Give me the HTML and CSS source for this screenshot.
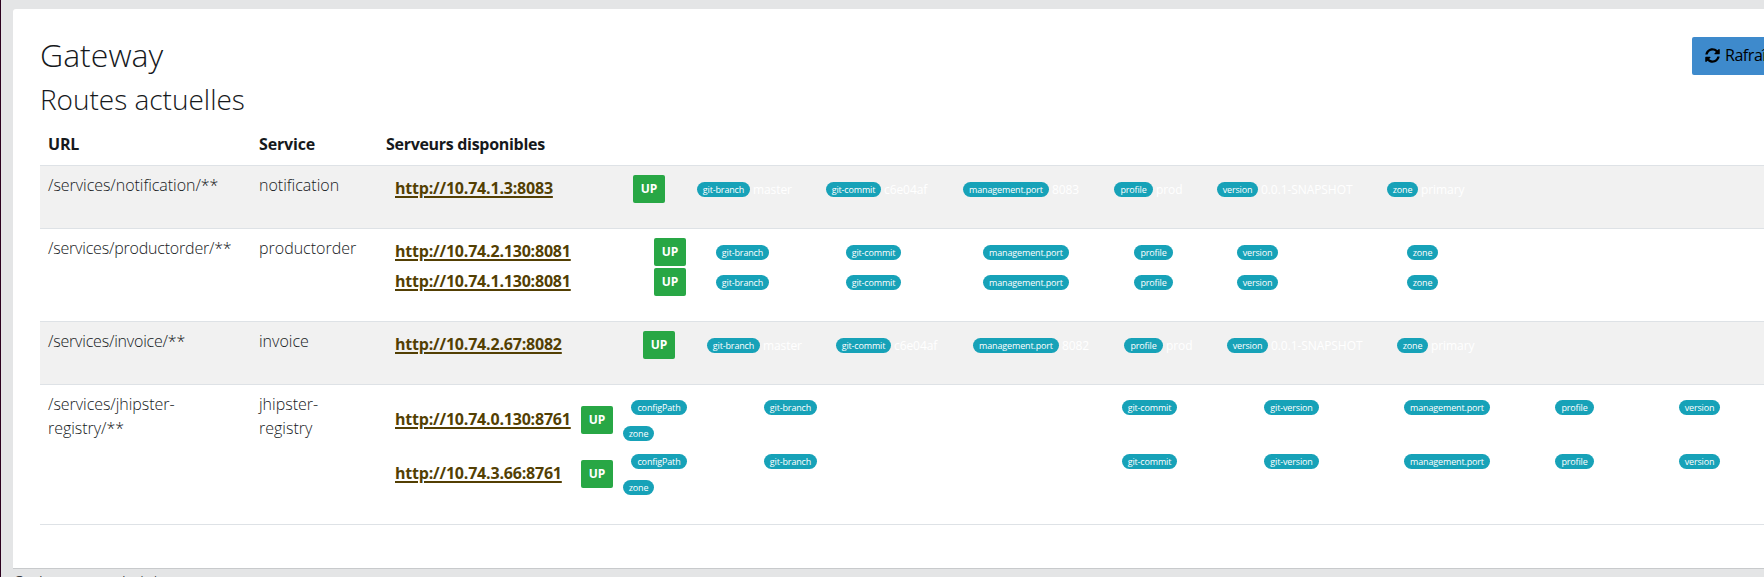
FILE: index.html
```html
<!DOCTYPE html>
<html lang="fr">
<head>
<meta charset="utf-8">
<title>Gateway</title>
<link rel="stylesheet" href="styles.css">
</head>
<body>
<div class="page">
  <main class="card">
    <header class="head">
      <h2 class="title">Gateway</h2>
      <button class="refresh"><svg class="icon" viewBox="0 0 512 512"><path fill="currentColor" d="M370.7 133.3C339.5 104 298.9 88 255.8 88c-77.5.1-144.3 53.2-162.8 126.9-1.3 5.4-6.1 9.2-11.7 9.2H24.1c-7.5 0-13.200-6.800-11.800-14.200C33.900 94.900 134.800 8 256 8c66.400 0 126.800 26.100 171.300 68.700L463 41C478.100 25.900 504 36.600 504 57.900V192c0 13.300-10.700 24-24 24H345.900c-21.400 0-32.100-25.900-17-41l41.800-41.700zM32 296h134.100c21.400 0 32.100 25.900 17 41l-41.800 41.800c31.300 29.300 71.800 45.300 114.900 45.300 77.400-.1 144.300-53.100 162.800-126.800 1.300-5.400 6.100-9.200 11.700-9.200h57.300c7.500 0 13.200 6.800 11.800 14.200C478.100 417.100 377.200 504 256 504c-66.400 0-126.800-26.100-171.300-68.700L49 471C33.900 486.100 8 475.400 8 454.100V320c0-13.300 10.700-24 24-24z"/></svg><span>Rafraîchir</span></button>
    </header>
    <h3 class="subtitle">Routes actuelles</h3>
    <div class="table">
      <div class="row labels"><div>URL</div><div>Service</div><div class="wide">Serveurs disponibles</div></div>

      <div class="row odd">
        <div class="url">/services/notification/**</div><div>notification</div>
        <div class="servers at-near">
          <div class="server"><a class="link">http://10.74.1.3:8083</a><span class="up">UP</span>
            <div class="tags"><span class="tag"><b class="pill branch">git-branch</b>master</span><span class="tag"><b class="pill commit">git-commit</b>c6e04af</span><span class="tag"><b class="pill port">management.port</b>8083</span><span class="tag"><b class="pill profile">profile</b>prod</span><span class="tag"><b class="pill version">version</b>0.0.1-SNAPSHOT</span><span class="tag"><b class="pill zone">zone</b>primary</span></div></div>
        </div>
      </div>

      <div class="row">
        <div class="url long">/services/productorder/**</div><div>productorder</div>
        <div class="servers at-far">
          <div class="server"><a class="link">http://10.74.2.130:8081</a><span class="up">UP</span>
            <div class="tags"><span class="tag"><b class="pill branch">git-branch</b></span><span class="tag"><b class="pill commit">git-commit</b></span><span class="tag"><b class="pill port">management.port</b></span><span class="tag"><b class="pill profile">profile</b></span><span class="tag"><b class="pill version">version</b></span><span class="tag"><b class="pill zone">zone</b></span></div></div>
          <div class="server"><a class="link">http://10.74.1.130:8081</a><span class="up">UP</span>
            <div class="tags"><span class="tag"><b class="pill branch">git-branch</b></span><span class="tag"><b class="pill commit">git-commit</b></span><span class="tag"><b class="pill port">management.port</b></span><span class="tag"><b class="pill profile">profile</b></span><span class="tag"><b class="pill version">version</b></span><span class="tag"><b class="pill zone">zone</b></span></div></div>
        </div>
      </div>

      <div class="row odd">
        <div class="url long">/services/invoice/**</div><div>invoice</div>
        <div class="servers at-mid">
          <div class="server"><a class="link">http://10.74.2.67:8082</a><span class="up">UP</span>
            <div class="tags"><span class="tag"><b class="pill branch">git-branch</b>master</span><span class="tag"><b class="pill commit">git-commit</b>c6e04af</span><span class="tag"><b class="pill port">management.port</b>8082</span><span class="tag"><b class="pill profile">profile</b>prod</span><span class="tag"><b class="pill version">version</b>0.0.1-SNAPSHOT</span><span class="tag"><b class="pill zone">zone</b>primary</span></div></div>
        </div>
      </div>

      <div class="row last">
        <div class="url">/services/jhipster-<br>registry/**</div><div>jhipster-<br>registry</div>
        <div class="servers registry">
          <div class="server"><a class="link">http://10.74.0.130:8761</a><span class="up">UP</span>
            <div class="tags"><span class="tag"><b class="pill config">configPath</b></span><span class="tag"><b class="pill branch">git-branch</b></span><span class="tag"><b class="pill commit">git-commit</b></span><span class="tag"><b class="pill commit">git-version</b></span><span class="tag"><b class="pill port">management.port</b></span><span class="tag"><b class="pill profile">profile</b></span><span class="tag"><b class="pill version">version</b></span><span class="tag wrapped"><b class="pill zone">zone</b></span></div></div>
          <div class="server"><a class="link">http://10.74.3.66:8761</a><span class="up">UP</span>
            <div class="tags"><span class="tag"><b class="pill config">configPath</b></span><span class="tag"><b class="pill branch">git-branch</b></span><span class="tag"><b class="pill commit">git-commit</b></span><span class="tag"><b class="pill commit">git-version</b></span><span class="tag"><b class="pill port">management.port</b></span><span class="tag"><b class="pill profile">profile</b></span><span class="tag"><b class="pill version">version</b></span><span class="tag wrapped"><b class="pill zone">zone</b></span></div></div>
        </div>
      </div>
    </div>
  </main>
  <footer class="footer">Ceci est votre pied de page</footer>
</div>
</body>
</html>
```
FILE: styles.css
```css
* { box-sizing: border-box; }
html, body { height: 100%; }
body {
  margin: 0;
  overflow: hidden;
  background: #e4e5e6;
  color: #16191c;
  font: 330 16px/24px "Open Sans", "Noto Sans", sans-serif;
  white-space: nowrap;
}
.page {
  height: 577px;
  overflow: hidden;
  border-left: 1px solid #2c001e;
  padding: 9px 0 0 12px;
}
.card {
  height: 560px;
  padding: 28px 0 0 27px;
  background: #fff;
  border-bottom: 1px solid #c8cacc;
  border-top-left-radius: 3px;
}
.head {
  display: flex;
  justify-content: space-between;
  height: 45px;
}
.title, .subtitle { margin: 0; font-weight: 320; }
.title { font-size: 32px; line-height: 36px; }
.subtitle { font-size: 28px; line-height: 34px; letter-spacing: -.02px; }
.refresh {
  display: flex;
  align-items: center;
  gap: 5px;
  width: 72px;
  height: 38px;
  padding: 0 0 2px 13px;
  overflow: hidden;
  border: 0;
  border-radius: 2px 0 0 2px;
  background: #3e8acc;
  color: #000;
  font: 400 16px "Open Sans", sans-serif;
  letter-spacing: -.45px;
}
.icon { flex: none; width: 15px; height: 15px; }

.table { padding-top: 9px; }
.row {
  display: grid;
  grid-template-columns: 211px 127px 1fr;
  height: 63px;
  padding: 7px 0 0 8px;
  border-top: 1px solid #dee2e6;
}
.row:nth-child(3) { height: 93px; }
.row.odd { background: #f1f1f1; }
.row.last { height: 141px; border-bottom: 1px solid #dee2e6; }
.row.labels { height: 40px; padding-top: 7px; border: 0; font-weight: 700; letter-spacing: -.15px; }
.wide { letter-spacing: -.3px; }
.url { letter-spacing: -.04px; }
.url.long { letter-spacing: -.2px; }

.servers { padding: 2px 0 0 9px; }
.server {
  display: grid;
  grid-template-columns: var(--up) var(--tags) 1fr;
  height: 30px;
}
.at-near { --up: 238px; --tags: 64px; }
.at-far { --up: 259px; --tags: 62px; }
.at-mid { --up: 248px; --tags: 64px; }
.link {
  justify-self: start;
  margin-top: 1px;
  color: #533f03;
  font-weight: 700;
  letter-spacing: -.2px;
  text-decoration: underline;
  text-decoration-thickness: 2px;
  text-underline-offset: 2px;
}
.up {
  width: 32px;
  height: 28px;
  border-radius: 2px;
  background: #28a745;
  color: #fff;
  font-size: 12px;
  font-weight: 700;
  line-height: 27px;
  text-align: center;
}
.tags {
  display: grid;
  grid-template-columns: 129px 137px 151px 103px 170px 1fr;
  padding-top: 7px;
}
.at-far .tags { grid-template-columns: 130px 137px 151px 103px 170px 1fr; }
.tag {
  display: flex;
  align-items: center;
  gap: 3px;
  height: 15px;
  color: #fff;
  font-size: 12px;
  font-weight: 400;
  line-height: 13px;
  letter-spacing: -.08px;
}
.pill {
  height: 15px;
  border-radius: 8px;
  background: #17a2b8;
  font-size: 9px;
  font-weight: 400;
  line-height: 15px;
  letter-spacing: -.15px;
  text-align: center;
}
.branch { width: 53px; }
.commit { width: 55px; }
.port { width: 86px; }
.profile { width: 39px; }
.version { width: 41px; }
.zone { width: 31px; }
.config { width: 56px; }

.registry { --up: 186px; --tags: 50px; padding-top: 0; }
.registry .server { height: 54px; }
.registry .link { margin-top: 15px; }
.registry .up { margin-top: 14px; }
.registry .tags {
  grid-template-columns: 133px 358px 142px 140px 151px 124px 1fr;
  grid-template-rows: 26px 15px;
  padding-top: 8px;
}
.wrapped { grid-row: 2; margin-left: -8px; }
.footer { padding-top: 1px; line-height: 24px; letter-spacing: -.1px; }
```
